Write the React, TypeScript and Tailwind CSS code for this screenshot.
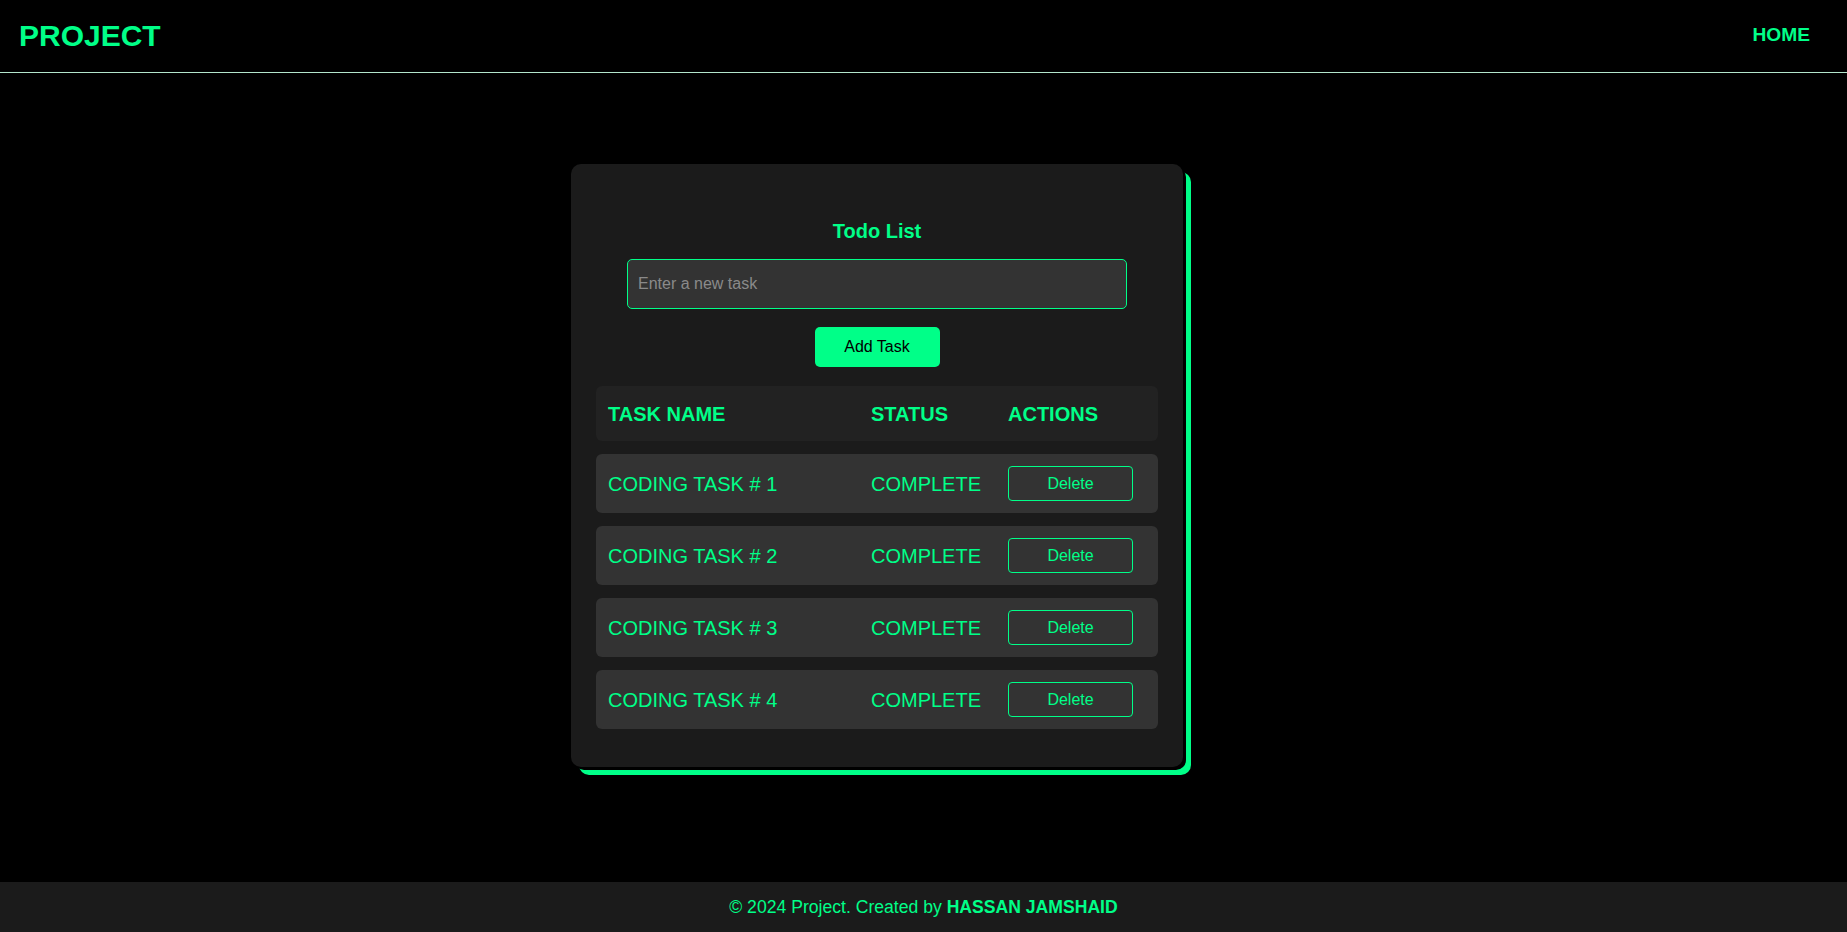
import React, { useState } from 'react';

const initialTasks = [
  { id: 1, name: 'CODING TASK # 1', status: 'COMPLETE' },
  { id: 2, name: 'CODING TASK # 2', status: 'COMPLETE' },
  { id: 3, name: 'CODING TASK # 3', status: 'COMPLETE' },
  { id: 4, name: 'CODING TASK # 4', status: 'COMPLETE' },
];

export default function App() {
  const [tasks, setTasks] = useState(initialTasks);
  const [text, setText] = useState('');

  const addTask = () => {
    if (!text.trim()) return;
    setTasks([...tasks, { id: Date.now(), name: text.toUpperCase(), status: 'PENDING' }]);
    setText('');
  };

  return (
    <div className="min-h-screen flex flex-col bg-black text-[#00ff88] font-['Liberation_Sans',Arial,sans-serif]">
      {/* Header */}
      <header className="h-[73px] flex items-center justify-between pl-[19px] pr-[37px] border-b border-[#b3e6cc]">
        <h1 className="text-[30px] font-bold leading-none">PROJECT</h1>
        <nav>
          <a href="#" className="text-[19.2px] font-bold leading-none">HOME</a>
        </nav>
      </header>

      {/* Main */}
      <main className="flex-1 pt-[91px] pl-[571px]">
        <div className="w-[612px] bg-[#1b1b1b] rounded-[10px] px-[25px] pt-[56px] pb-[38px] shadow-[3px_3px_0_#000,8px_8px_0_#00ff88]">
          <h2 className="text-[20px] leading-[23px] font-bold text-center">Todo List</h2>

          <div className="flex justify-center mt-[16px]">
            <input
              value={text}
              onChange={e => setText(e.target.value)}
              placeholder="Enter a new task"
              className="w-[500px] h-[50px] px-[10px] bg-[#333333] border border-[#00ff88] rounded-[5px] text-[16px] text-white placeholder:text-[#8a8a8a] outline-none"
            />
          </div>

          <div className="flex justify-center mt-[18px]">
            <button
              onClick={addTask}
              className="w-[125px] h-[40px] bg-[#00ff88] text-black text-[16px] rounded-[5px]"
            >
              Add Task
            </button>
          </div>

          {/* Table */}
          <div className="mt-[19px] flex flex-col gap-[13px]">
            <div className="grid grid-cols-[263px_137px_162px] items-center h-[55px] bg-[#222222] rounded-[6px] text-[20px] font-bold">
              <div className="pl-[12px]">TASK NAME</div>
              <div className="pl-[12px]">STATUS</div>
              <div className="pl-[12px]">ACTIONS</div>
            </div>

            {tasks.map(task => (
              <div
                key={task.id}
                className="grid grid-cols-[263px_137px_162px] items-center h-[59px] bg-[#333333] rounded-[6px] text-[20px]"
              >
                <div className="pl-[12px]">{task.name}</div>
                <div className="pl-[12px]">{task.status}</div>
                <div className="pl-[12px]">
                  <button
                    onClick={() => setTasks(tasks.filter(t => t.id !== task.id))}
                    className="w-[125px] h-[35px] border border-[#00ff88] rounded-[4px] text-[16px] text-[#00ff88]"
                  >
                    Delete
                  </button>
                </div>
              </div>
            ))}
          </div>
        </div>
      </main>

      {/* Footer */}
      <footer className="h-[50px] bg-[#1b1b1b] flex items-center justify-center text-[17.6px]">
        <p>
          © 2024 Project. Created by <span className="font-bold">HASSAN JAMSHAID</span>
        </p>
      </footer>
    </div>
  );
}
